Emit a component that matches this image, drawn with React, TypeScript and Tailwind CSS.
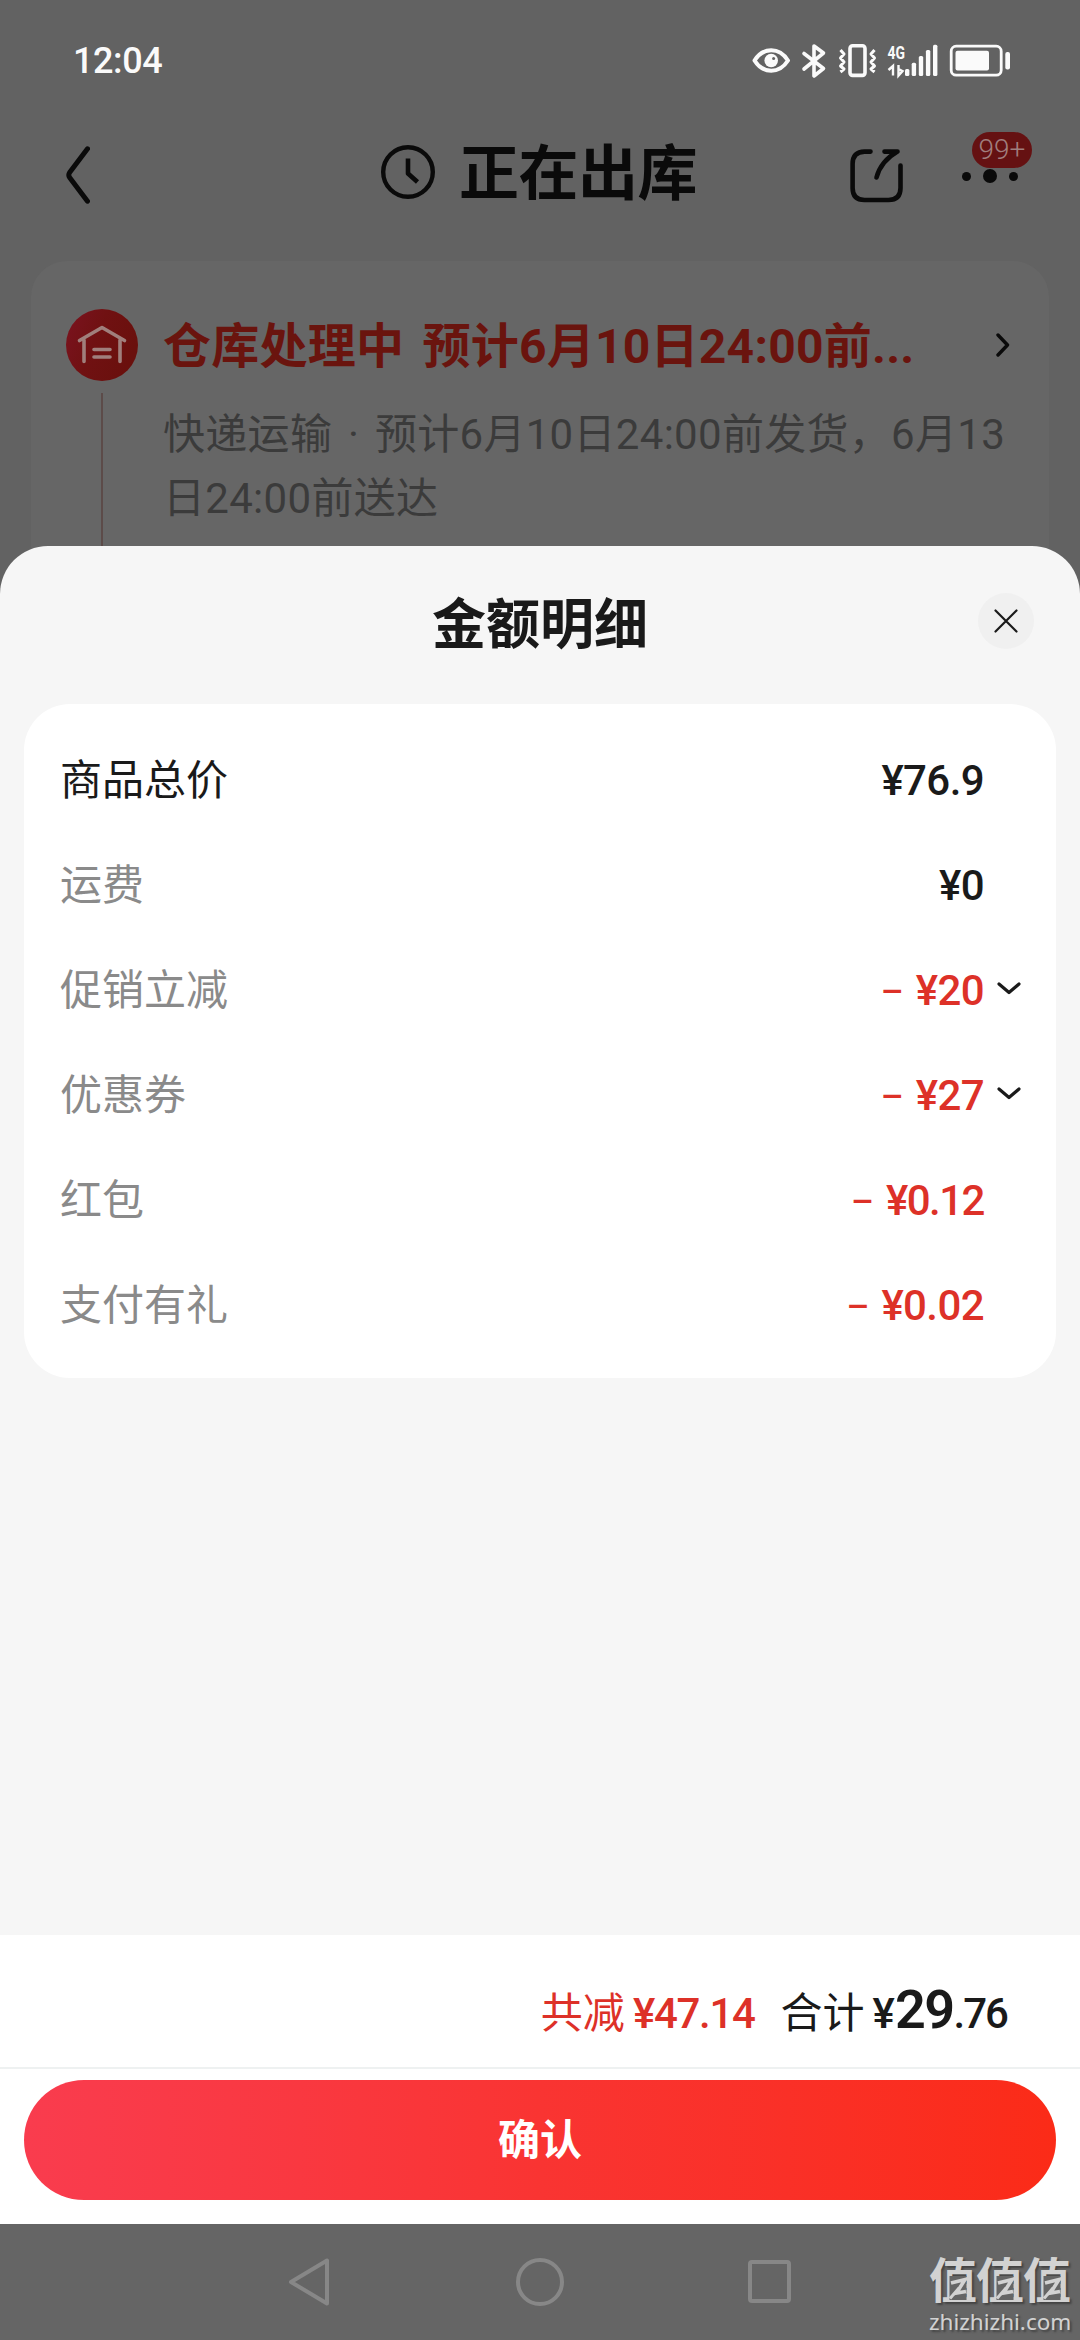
import React from 'react';

interface AmountRow {
  label: string;
  value: string;
  discount?: boolean;
  expandable?: boolean;
  tight?: boolean;
}

/**
 * 金额明细数据
 */
const rows: AmountRow[] = [
  { label: '商品总价', value: '¥76.9' },
  { label: '运费', value: '¥0' },
  { label: '促销立减', value: '¥20', discount: true, expandable: true },
  { label: '优惠券', value: '¥27', discount: true, expandable: true },
  { label: '红包', value: '¥0.12', discount: true, tight: true },
  { label: '支付有礼', value: '¥0.02', discount: true },
];

/**
 * 状态栏图标
 */
const StatusIcons: React.FC = () => (
  <svg className="w-[260px] h-[46px]" viewBox="752 39 260 46" fill="none" stroke="#fafafa">
    {/* 护眼 */}
    <path d="M754.5 61.5Q761 51.3 771.2 51.3T788 61.5Q781.5 71.7 771.2 71.7T754.5 61.5Z" strokeWidth="4" strokeLinejoin="round" />
    <circle cx="771.2" cy="61.5" r="6.8" fill="#fafafa" stroke="none" />
    <circle cx="773.6" cy="59.4" r="1.5" fill="#626262" stroke="none" />
    {/* 蓝牙 */}
    <path d="M804 54.5 823.5 69.5 814 77V47L823.5 54 804 70" strokeWidth="3.6" strokeLinejoin="round" strokeLinecap="round" />
    {/* 振动 */}
    <rect x="850" y="46.8" width="15" height="29.6" rx="2.6" strokeWidth="3.6" />
    <path d="M840.5 51 844 55 840.5 59 844 63 840.5 67 844 70 840.5 73M874.5 51 871 55 874.5 59 871 63 874.5 67 871 70 874.5 73" strokeWidth="3" strokeLinejoin="round" />
    {/* 数据收发与信号 */}
    <path d="M888.500 71 893 67V76.500M898.500 66V76.500L902.500 72 898.500 70" strokeWidth="2.400" />
    <g fill="#fafafa" stroke="none">
      <rect x="905" y="70" width="4.400" height="7" rx="1.500" />
      <rect x="911.700" y="63.700" width="4.400" height="13.300" rx="1.500" />
      <rect x="918.800" y="57" width="4.400" height="20" rx="1.500" />
      <rect x="925.900" y="51" width="4.400" height="26" rx="1.500" />
      <rect x="933" y="45.700" width="4.400" height="31.300" rx="1.500" />
      <rect x="955.500" y="51.800" width="33.500" height="19.800" rx="2" />
      <rect x="1005.300" y="53" width="4.700" height="17.500" rx="2" />
    </g>
    <rect x="951.200" y="47.200" width="50" height="29" rx="5" strokeWidth="2.800" />
    <text x="887.500" y="60" fontFamily="Roboto, sans-serif" fontSize="19" fontWeight="700" textLength="17.500" lengthAdjust="spacingAndGlyphs" fill="#fafafa" stroke="none">
      4G
    </text>
  </svg>
);

const BackIcon: React.FC = () => (
  <svg className="w-[24px] h-[58px]" viewBox="0 0 24 58" fill="none" stroke="#0a0a0a" strokeWidth="5" strokeLinecap="round" strokeLinejoin="round">
    <path d="M21.500 2.800 3.600 26.500Q2 29 3.600 31.500L21.500 55.200" />
  </svg>
);

const ClockIcon: React.FC = () => (
  <svg className="w-[54px] h-[54px]" viewBox="0 0 54 54" fill="none" stroke="#0a0a0a">
    <circle cx="27" cy="27" r="24.800" strokeWidth="4.400" />
    <path d="M27 13.500V28.500L36.500 37" strokeWidth="4.600" strokeLinejoin="round" />
  </svg>
);

const ShareIcon: React.FC = () => (
  <svg className="w-[54px] h-[54px]" viewBox="0 0 54 54" fill="none" stroke="#0a0a0a" strokeWidth="4.600" strokeLinecap="round" strokeLinejoin="round">
    <path d="M20.500 2.600H14.500Q2.600 2.600 2.600 15V39Q2.600 51 14.500 51H38.500Q50.500 51 50.500 39V16.500" />
    <path d="M34.500 2.600H47.500Q31 12 26.500 28.500" />
  </svg>
);

const WarehouseIcon: React.FC = () => (
  <svg className="w-[72px] h-[72px]" viewBox="0 0 72 72" fill="none">
    <defs>
      <linearGradient id="warehouse" x1="0" y1="0" x2="1" y2="0.400">
        <stop offset="0" stopColor="#7b1320" />
        <stop offset="0.500" stopColor="#701112" />
        <stop offset="1" stopColor="#6a100d" />
      </linearGradient>
    </defs>
    <circle cx="36" cy="36" r="36" fill="url(#warehouse)" />
    <path d="M13.500 31.500 36 18.500 58.500 31.500M18 31V52.500M54 31V52.500M28 40.500H44M28 48H44" stroke="#a07f7c" strokeWidth="3.600" strokeLinejoin="round" strokeLinecap="round" />
  </svg>
);

/**
 * 水印单字，口内为闪电形 Z
 */
const WatermarkGlyph: React.FC = () => (
  <span className="relative block w-[47px]">
    值
    <svg className="absolute top-[9px] left-0 h-[48px] w-[47px]" viewBox="0 0 47 48">
      <rect x="20.500" y="15" width="17" height="24" fill="#656565" />
      <path d="M22 22 36 18.500 27.500 32 37 30.500" fill="none" stroke="#d2d2d2" strokeWidth="3.600" />
      <path d="M30 27 21 37.500" fill="none" stroke="#d2d2d2" strokeWidth="3" />
    </svg>
  </span>
);

/**
 * 单行金额
 */
const DetailRow: React.FC<{ row: AmountRow; primary: boolean }> = ({ row, primary }) => (
  <div className="flex h-[105px] items-center">
    <span className={`flex-1 pt-[3px] text-[42px] ${primary ? 'text-[#1a1a1a]' : 'text-[#8a8a8a]'}`}>{row.label}</span>
    <div className={`flex items-center pt-[4px] text-[42px] font-medium ${row.discount ? 'text-[#dd3128]' : 'text-[#1a1a1a]'}`}>
      {row.discount && <span className="mr-[13px] pb-[9px] font-['Noto_Sans'] font-normal">–</span>}
      <span className={row.tight ? 'tracking-[-1.5px]' : 'tracking-[-0.6px]'}>{row.value}</span>
    </div>
    <div className="ml-[12px] flex w-[25px] justify-end">
      {row.expandable && (
        <svg className="h-[13px] w-[24px]" viewBox="0 0 24 13" fill="none" stroke="#1a1a1a" strokeWidth="3.200" strokeLinecap="round" strokeLinejoin="round">
          <path d="M2 2 12 10.500 22 2" />
        </svg>
      )}
    </div>
  </div>
);

export default function App() {
  return (
    <div className="flex h-[2340px] w-[1080px] flex-col overflow-hidden bg-[#626262] font-[Roboto,'Noto_Sans_CJK_SC',sans-serif]">
      {/* 遮罩下的订单页 */}
      <div className="h-[594px] shrink-0 overflow-hidden">
        <div className="flex h-[122px] items-center justify-between pr-[68px] pl-[73px]">
          <span className="text-[36px] font-medium tracking-[-0.4px] text-[#fafafa]">12:04</span>
          <StatusIcons />
        </div>

        <div className="flex h-[139px] items-start pl-[66px]">
          <div className="mt-[24px]">
            <BackIcon />
          </div>
          <div className="ml-[291px] mt-[23px]">
            <ClockIcon />
          </div>
          <h1 className="ml-[24px] mt-[11px] w-[240px] whitespace-nowrap text-[60px] leading-[84px] font-bold tracking-[-0.5px] text-[#0a0a0a]">正在出库</h1>
          <div className="ml-[151px] mt-[27px]">
            <ShareIcon />
          </div>
          <div className="relative ml-[58px] mt-[47px] flex items-center gap-[12px]">
            <i className="h-[9px] w-[9px] rounded-full bg-[#0a0a0a]" />
            <i className="h-[14px] w-[14px] rounded-full bg-[#0a0a0a]" />
            <i className="h-[9px] w-[9px] rounded-full bg-[#0a0a0a]" />
            <span className="absolute top-[-37px] left-[10px] flex h-[36px] w-[60px] items-center justify-center rounded-full bg-[#651112] text-[28px] font-light text-[#a07e7e]">
              99+
            </span>
          </div>
        </div>

        <div className="mx-[31px] flex h-[333px] rounded-t-[36px] bg-[#666666] pl-[35px]">
          <div className="flex flex-col items-center pt-[48px]">
            <WarehouseIcon />
            <div className="mt-[12px] w-[2px] flex-1 bg-[#5c4b49]" />
          </div>
          <div className="ml-[25px] w-[847px] pt-[48px]">
            <div className="flex h-[72px] items-center">
              <span className="whitespace-nowrap pt-[4px] text-[48px] font-bold tracking-[0.25px] text-[#6a140e] [word-spacing:6px]">仓库处理中 预计6月10日24:00前...</span>
              <svg className="ml-auto h-[24px] w-[14px]" viewBox="0 0 14 24" fill="none" stroke="#0a0a0a" strokeWidth="3.400" strokeLinecap="round" strokeLinejoin="round">
                <path d="M2 2 11.500 12 2 22" />
              </svg>
            </div>
            <p className="mt-[22px] whitespace-nowrap text-[42px] leading-[64px] tracking-[0.3px] text-[#3b3b3b] [word-spacing:5px]">
              快递运输 · 预计6月10日24:00前发货，6月13
              <br />
              日24:00前送达
            </p>
          </div>
        </div>
      </div>

      {/* 金额明细弹层 */}
      <div className="relative -mt-[48px] flex h-[1389px] shrink-0 flex-col rounded-t-[48px] bg-[#f6f6f6]">
        <div className="flex h-[158px] items-center pr-[46px] pb-[8px] pl-[102px]">
          <h2 className="flex-1 pt-[8px] text-center text-[54px] font-bold text-[#1a1a1a]">金额明细</h2>
          <button className="flex h-[56px] w-[56px] items-center justify-center rounded-full bg-[#f0f0f0]">
            <svg className="h-[24px] w-[24px]" viewBox="0 0 24 24" stroke="#1a1a1a" strokeWidth="2.200" strokeLinecap="round">
              <path d="M1.500 1.500 22.500 22.500M22.500 1.500 1.500 22.500" />
            </svg>
          </button>
        </div>
        <div className="mx-[24px] h-[674px] rounded-[46px] bg-white pr-[35px] pl-[36px] pt-[22px]">
          {rows.map((row, i) => (
            <DetailRow key={row.label} row={row} primary={i === 0} />
          ))}
        </div>
      </div>

      {/* 合计与确认 */}
      <div className="flex h-[132px] shrink-0 items-baseline justify-end bg-white pt-[45px] pr-[73px] text-[42px] text-[#1a1a1a]">
        <span className="text-[#dd3128]">共减</span>
        <span className="ml-[8px] font-medium tracking-[-1.3px] text-[#dd3128]">¥47.14</span>
        <span className="ml-[26px]">合计</span>
        <span className="ml-[8px] font-medium">¥</span>
        <span className="text-[54px] leading-[60px] font-semibold tracking-[-1.5px]">29</span>
        <span className="font-medium tracking-[-2px]">.76</span>
      </div>
      <div className="h-[157px] shrink-0 border-t-2 border-[#eef1f1] bg-white px-[24px] pt-[11px]">
        <button className="flex h-[120px] w-full items-center justify-center rounded-full bg-linear-to-r from-[#f93c4e] via-[#f93432] to-[#fb2b17] text-[42px] font-bold text-white">
          确认
        </button>
      </div>

      {/* 系统导航栏 */}
      <div className="flex h-[116px] shrink-0 items-start bg-[#656565] pl-[288px]">
        <svg className="mt-[34px] h-[48px] w-[42px]" viewBox="0 0 42 48" fill="none" stroke="#878787" strokeWidth="4" strokeLinejoin="round">
          <path d="M39 2.500V45.500L3 24Z" />
        </svg>
        <div className="mt-[34px] ml-[186px] h-[48px] w-[48px] rounded-full border-4 border-[#878787]" />
        <div className="mt-[36px] ml-[184px] h-[43px] w-[43px] rounded-[4px] border-4 border-[#878787]" />
        <div className="mt-[28px] ml-[138px] w-[142px] whitespace-nowrap text-[#d2d2d2] [text-shadow:2px_2px_2px_#444]">
          <div className="flex text-[48px] leading-[60px] font-bold">
            <WatermarkGlyph />
            <WatermarkGlyph />
            <WatermarkGlyph />
          </div>
          <div className="-mt-[2px] font-['Noto_Sans'] text-[22.5px] leading-[24px]">zhizhizhi.com</div>
        </div>
      </div>
    </div>
  );
}
